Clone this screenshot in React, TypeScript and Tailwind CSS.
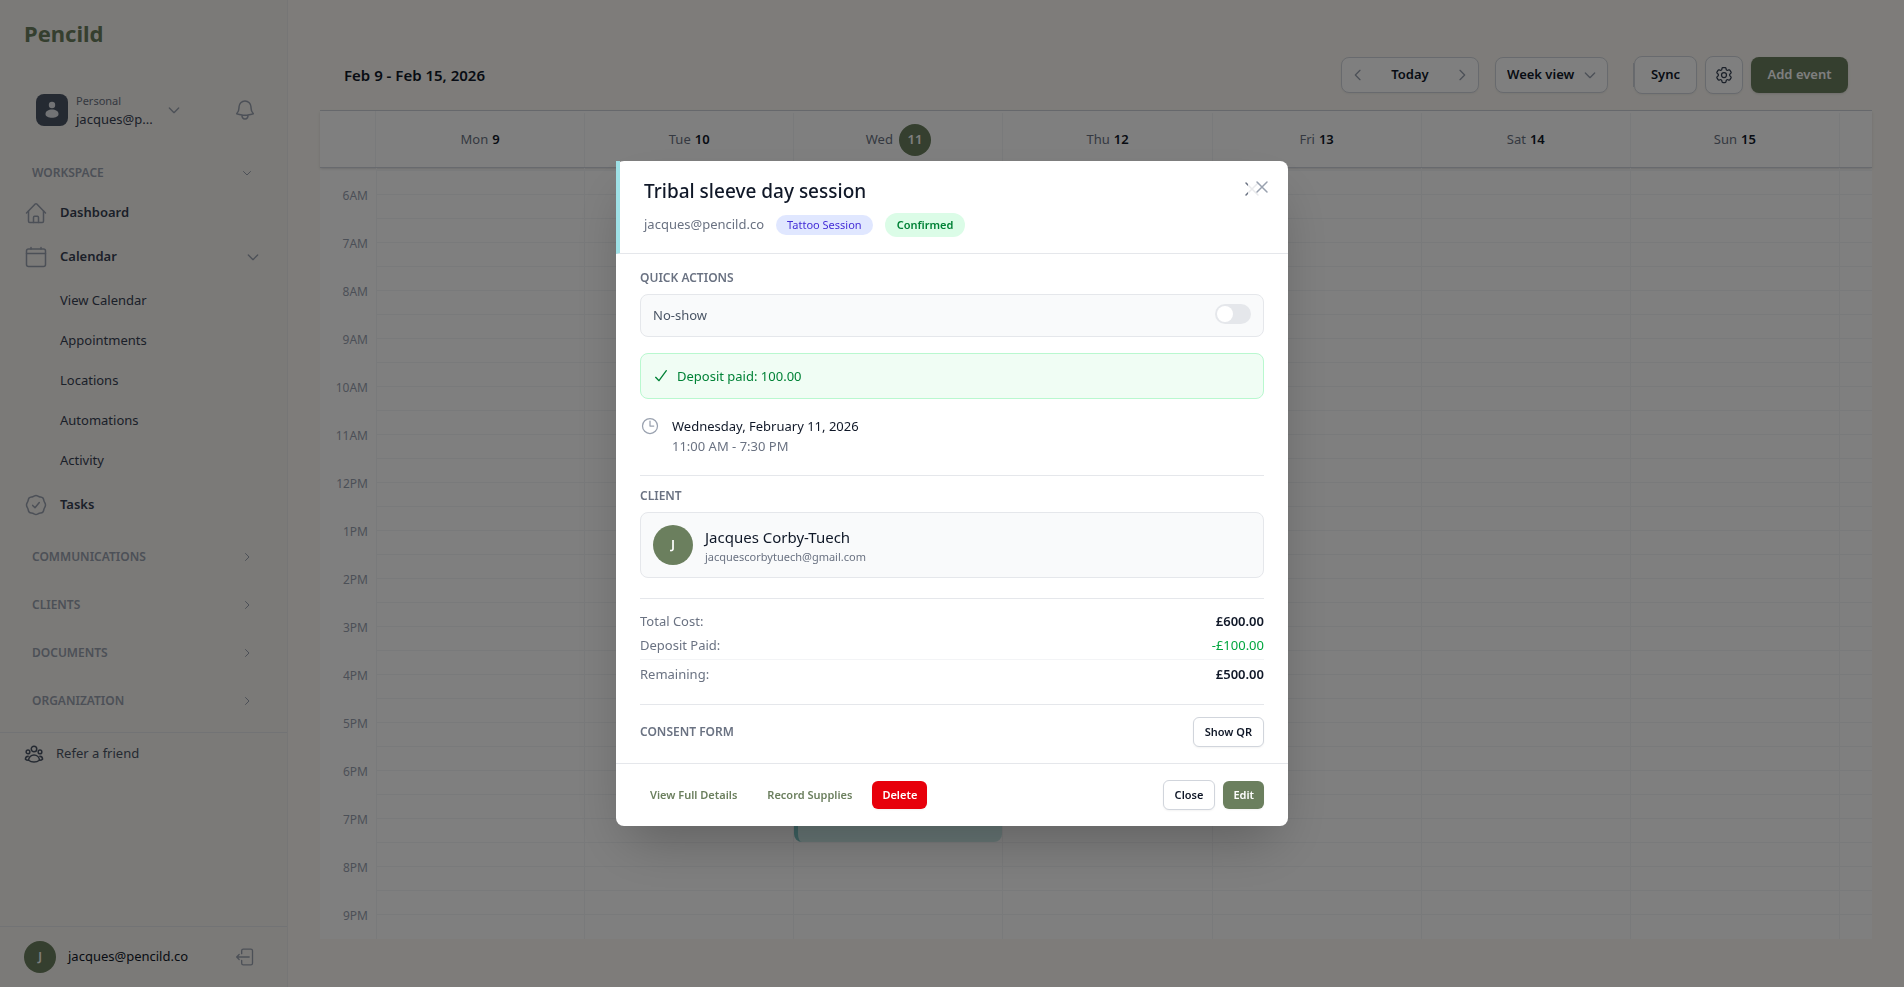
import { useState } from "react";
import type { ReactNode } from "react";
import { HiOutlineBell, HiOutlineClock, HiOutlineCog6Tooth } from "react-icons/hi2";

interface NavSection {
  label: string;
}

interface DayColumn {
  name: string;
  date: number;
  today?: boolean;
}

const calendarLinks = ["View Calendar", "Appointments", "Locations", "Automations", "Activity"];

const closedSections: NavSection[] = [
  { label: "Communications" },
  { label: "Clients" },
  { label: "Documents" },
  { label: "Organization" },
];

const days: DayColumn[] = [
  { name: "Mon", date: 9 },
  { name: "Tue", date: 10 },
  { name: "Wed", date: 11, today: true },
  { name: "Thu", date: 12 },
  { name: "Fri", date: 13 },
  { name: "Sat", date: 14 },
  { name: "Sun", date: 15 },
];

const hours = [
  "6AM", "7AM", "8AM", "9AM", "10AM", "11AM", "12PM", "1PM",
  "2PM", "3PM", "4PM", "5PM", "6PM", "7PM", "8PM", "9PM",
];

const halfHours = Array.from({ length: 31 }, (_, i) => i);

function Icon({ className, width = 1.5, children }: { className: string; width?: number; children: ReactNode }) {
  return (
    <svg
      viewBox="0 0 24 24"
      fill="none"
      stroke="currentColor"
      strokeWidth={width}
      strokeLinecap="round"
      strokeLinejoin="round"
      className={className}
      aria-hidden="true"
    >
      {children}
    </svg>
  );
}

function ChevronDown({ className }: { className: string }) {
  return (
    <Icon className={className} width={2}>
      <path d="m5 9 7 7 7-7" />
    </Icon>
  );
}

function ChevronRight({ className }: { className: string }) {
  return (
    <Icon className={className} width={2}>
      <path d="m9 5 7 7-7 7" />
    </Icon>
  );
}

function HomeIcon() {
  return (
    <Icon className="size-6 text-gray-400">
      <path d="M2.500 12 11.200 3.100a1.100 1.100 0 0 1 1.600 0L21.500 12" />
      <path d="M4.500 10v10.200c0 .7.500 1.200 1.200 1.200h12.600c.7 0 1.200-.5 1.200-1.200V10" />
      <path d="M9.500 21.400v-5c0-.6.500-1.100 1.100-1.100h2.800c.6 0 1.100.5 1.100 1.100v5" />
    </Icon>
  );
}

function CalendarIcon() {
  return (
    <Icon className="size-6 text-gray-400">
      <rect x="2.500" y="4" width="19" height="17.500" rx="2" />
      <path d="M2.500 8.500h19M7 4V2.500M17 4V2.500" />
    </Icon>
  );
}

function TasksIcon() {
  return (
    <Icon className="size-6 text-gray-400">
      <path d="M12 2.500c1.400 0 2 .9 3.300 1.300s2.500.1 3.500 1.100.8 2.200 1.300 3.400 1.400 2 1.400 3.700-.9 2.500-1.400 3.700-.3 2.400-1.300 3.400-2.200.7-3.500 1.100-1.900 1.300-3.300 1.300-2-.9-3.300-1.300-2.500-.1-3.500-1.100-.8-2.200-1.300-3.400S2.500 13.700 2.500 12s.9-2.500 1.400-3.700.3-2.400 1.300-3.400 2.200-.7 3.500-1.100S10.600 2.500 12 2.500Z" />
      <path d="m8.700 12.400 2.300 2.400 4.300-5.300" />
    </Icon>
  );
}

function FriendsIcon() {
  return (
    <Icon className="size-5 text-gray-600" width={1.800}>
      <circle cx="12" cy="6" r="3.300" />
      <circle cx="4.800" cy="9.500" r="2.200" />
      <circle cx="19.200" cy="9.500" r="2.200" />
      <path d="M5.500 19.500c0-3.600 2.900-6.300 6.500-6.300s6.500 2.700 6.500 6.300c-1.800 1.400-4 2.100-6.500 2.100s-4.700-.7-6.500-2.100Z" />
      <path d="M5 14.800c-2 .2-3.300 1.600-3.300 3.500.7.700 1.900 1.200 3.300 1.200M19 14.800c2 .2 3.300 1.600 3.300 3.500-.7.700-1.900 1.200-3.300 1.200" />
    </Icon>
  );
}

function SignOutIcon() {
  return (
    <Icon className="size-5" width={1.600}>
      <path d="M8 8V4.500C8 3.400 8.900 2.500 10 2.500h9c1.100 0 2 .9 2 2v15c0 1.100-.9 2-2 2h-9c-1.100 0-2-.9-2-2V16" />
      <path d="M17 12H2M5 9l-3 3 3 3" />
    </Icon>
  );
}

function Sidebar() {
  return (
    <aside className="flex w-72 shrink-0 flex-col border-r border-gray-200/60 bg-[#f7f4f0]">
      <div className="flex h-[66px] items-center px-6">
        <span className="text-[22px] font-bold text-[#6b7f5e]">Pencild</span>
      </div>

      {/* Workspace switcher */}
      <div className="flex h-[87px] items-center justify-between pr-[30px] pl-9">
        <button className="flex items-center gap-2 text-left">
          <span className="flex size-8 items-center justify-center rounded-lg bg-gray-600 text-gray-200">
            <svg viewBox="0 0 16 18" fill="currentColor" className="h-[18px] w-4" aria-hidden="true">
              <circle cx="8" cy="4" r="3.200" />
              <path d="M1.500 13c0-3 3-4.500 6.500-4.500s6.500 1.500 6.500 4.500c0 2.500-3 3.800-6.500 3.800S1.500 15.500 1.500 13Z" />
            </svg>
          </span>
          <span className="w-[82px] pt-0.5">
            <span className="block text-[11px] leading-4 text-gray-500">Personal</span>
            <span className="block text-[13px] leading-5 text-gray-700">jacques@p...</span>
          </span>
          <ChevronDown className="size-4 text-gray-400" />
        </button>
        <button className="text-gray-400" aria-label="Notifications">
          <HiOutlineBell className="size-6" />
        </button>
      </div>

      <nav className="flex flex-col">
        <button className="flex h-10 items-center justify-between pr-[34px] pl-8 text-[12px] font-semibold text-gray-400">
          WORKSPACE
          <ChevronDown className="size-3" />
        </button>

        <a href="#dashboard" className="flex h-10 items-center gap-3 pl-6 text-[13px] font-semibold text-gray-700">
          <HomeIcon />
          Dashboard
        </a>
        <button className="mt-1 flex h-10 items-center gap-3 pr-[26px] pl-6 text-[13px] font-semibold text-gray-700">
          <CalendarIcon />
          Calendar
          <ChevronDown className="ml-auto size-4 text-gray-400" />
        </button>
        <div className="my-1 flex flex-col">
          {calendarLinks.map((label) => (
            <a key={label} href="#calendar" className="flex h-10 items-center pl-[60px] text-[13px] text-gray-700">
              {label}
            </a>
          ))}
        </div>
        <a href="#tasks" className="flex h-10 items-center gap-3 pl-6 text-[13px] font-semibold text-gray-700">
          <TasksIcon />
          Tasks
        </a>

        <div className="mt-2 flex flex-col">
          {closedSections.map((section) => (
            <button
              key={section.label}
              className="flex h-12 items-center justify-between pr-[34px] pl-8 text-[12px] font-semibold text-gray-400 uppercase"
            >
              {section.label}
              <ChevronRight className="size-3" />
            </button>
          ))}
        </div>
      </nav>

      <div className="mt-[7px] border-t border-gray-200">
        <a href="#refer" className="flex h-[42px] items-center gap-3 pl-6 text-[13px] text-gray-600">
          <FriendsIcon />
          Refer a friend
        </a>
      </div>

      <div className="mt-auto flex h-[61px] items-center gap-3 border-t border-gray-200 pr-8 pl-6">
        <span className="flex size-8 items-center justify-center rounded-full bg-[#6b7f5e] text-[12px] font-semibold text-white">
          J
        </span>
        <span className="text-[13px] text-gray-900">jacques@pencild.co</span>
        <button className="ml-auto text-gray-400" aria-label="Sign out">
          <SignOutIcon />
        </button>
      </div>
    </aside>
  );
}

function Toolbar() {
  return (
    <div className="flex h-[71px] items-center justify-between border-b border-gray-300 px-6">
      <h1 className="text-[15px] font-semibold text-gray-900">Feb 9 - Feb 15, 2026</h1>
      <div className="flex items-center text-[13px] font-semibold text-gray-900">
        <div className="flex h-9 w-[138px] items-center justify-between rounded-lg border border-gray-300 bg-white px-2 shadow-xs">
          <button className="text-gray-400" aria-label="Previous week">
            <Icon className="size-4" width={2}>
              <path d="m15 5-7 7 7 7" />
            </Icon>
          </button>
          <button>Today</button>
          <button className="text-gray-400" aria-label="Next week">
            <ChevronRight className="size-4" />
          </button>
        </div>
        <div className="relative ml-4">
          <select
            aria-label="Calendar view"
            className="h-9 w-[113px] appearance-none rounded-lg border border-gray-300 bg-white pl-[11px] font-semibold shadow-xs"
          >
            <option>Week view</option>
            <option>Day view</option>
            <option>Month view</option>
          </select>
          <ChevronDown className="pointer-events-none absolute top-2.5 right-2.5 size-4 text-gray-400" />
        </div>
        <div className="ml-[25px] h-6 w-px bg-gray-300" />
        <button className="h-[38px] w-[63px] rounded-lg border border-gray-300 bg-white shadow-xs">Sync</button>
        <button
          className="ml-2 flex size-[38px] items-center justify-center rounded-lg border border-gray-300 bg-white text-gray-700 shadow-xs"
          aria-label="Settings"
        >
          <HiOutlineCog6Tooth className="size-5" />
        </button>
        <button className="ml-2 h-9 w-[97px] rounded-lg bg-[#6b7f5e] text-white shadow-sm">Add event</button>
      </div>
    </div>
  );
}

function WeekGrid() {
  return (
    <div className="bg-white">
      {/* Day names */}
      <div className="relative flex h-[57px] border-b border-gray-300 pr-8 shadow-sm">
        <div className="w-14 shrink-0 border-r border-gray-100" />
        <div className="grid grow grid-cols-7 pt-0.5 text-[13px] text-gray-500">
          {days.map((day) => (
            <div key={day.name} className="flex items-center justify-center border-r border-gray-100">
              {day.name}
              {day.today ? (
                <span className="ml-1.5 flex size-8 items-center justify-center rounded-full bg-[#6b7f5e] font-semibold text-white">
                  {day.date}
                </span>
              ) : (
                <span className="ml-1 font-semibold text-gray-900">{day.date}</span>
              )}
            </div>
          ))}
        </div>
      </div>

      {/* Hours */}
      <div className="flex">
        <div className="w-14 shrink-0 pt-[3px] text-[12px] text-gray-400">
          {hours.map((hour) => (
            <div key={hour} className="flex h-12 items-center justify-end pt-px pr-2">
              {hour}
            </div>
          ))}
        </div>
        <div className="relative grow border-l border-gray-100">
          <div className="h-[3px] border-b border-gray-100" />
          {halfHours.map((slot) => (
            <div key={slot} className="h-6 border-b border-gray-100" />
          ))}
          <div className="absolute inset-y-0 right-8 -left-px grid grid-cols-7">
            {days.map((day) => (
              <div key={day.name} className="relative border-r border-gray-100">
                {day.today && (
                  <div className="absolute inset-x-0 top-[266px] h-[408px] rounded-lg border-l-4 border-[#7cc4c4] bg-[#cdebe9]" />
                )}
              </div>
            ))}
          </div>
        </div>
      </div>
    </div>
  );
}

function EventDialog() {
  const [noShow, setNoShow] = useState(false);

  return (
    <div
      role="dialog"
      aria-label="Tribal sleeve day session"
      className="relative w-full max-w-2xl rounded-lg bg-white shadow-2xl"
    >
      <button className="absolute top-4 right-6 text-gray-500" aria-label="Dismiss">
        <Icon className="size-6">
          <path d="M6 18 18 6M6 6l12 12" />
        </Icon>
      </button>
      <button
        className="absolute top-3 right-3 flex size-7 items-center justify-center bg-white/85 text-gray-400"
        aria-label="Close dialog"
      >
        <Icon className="size-5" width={1.800}>
          <path d="M6 18 18 6M6 6l12 12" />
        </Icon>
      </button>

      <div className="border-b border-l-4 border-b-gray-200 border-l-[#9fe1e7] px-6 py-4">
        <h2 className="text-[19px] leading-7 font-medium text-gray-900">Tribal sleeve day session</h2>
        <div className="mt-2 flex items-center gap-3">
          <span className="text-[13px] text-gray-500">jacques@pencild.co</span>
          <span className="rounded-full bg-indigo-100 px-[11px] text-[11px] leading-5 text-indigo-700">
            Tattoo Session
          </span>
          <span className="rounded-full bg-green-100 px-3 text-[11px] leading-6 font-semibold text-green-700">
            Confirmed
          </span>
        </div>
      </div>

      <div className="px-6 pt-4 pb-4">
        <h3 className="mb-2 text-[12px] leading-4 font-semibold text-gray-500">QUICK ACTIONS</h3>
        <div className="flex h-[43px] items-center justify-between rounded-lg border border-gray-200 bg-gray-50 px-3">
          <label htmlFor="no-show" className="text-[13px] text-gray-600">
            No-show
          </label>
          <input
            id="no-show"
            type="checkbox"
            checked={noShow}
            onChange={(e) => setNoShow(e.target.checked)}
            className="mb-1 flex h-5 w-9 appearance-none items-center rounded-full bg-gray-200 px-0.5 before:size-4 before:rounded-full before:bg-white checked:justify-end checked:bg-[#6b7f5e]"
          />
        </div>

        <div className="mt-4 flex items-center gap-2 rounded-lg border border-green-200 bg-green-50 p-3 text-[13px] leading-5 text-green-700">
          <Icon className="size-4" width={2}>
            <path d="m4 14 5 5L20 4" />
          </Icon>
          Deposit paid: 100.00
        </div>

        <div className="mt-4 flex gap-3 pt-px pb-[3px] text-[13px] leading-5">
          <HiOutlineClock className="size-5 text-gray-400" />
          <div>
            <p className="text-gray-900">Wednesday, February 11, 2026</p>
            <p className="text-gray-500">11:00 AM - 7:30 PM</p>
          </div>
        </div>

        <section className="mt-4 border-t border-gray-200 pt-3">
          <h3 className="mb-2 text-[12px] leading-4 font-semibold text-gray-500">CLIENT</h3>
          <div className="flex items-center gap-3 rounded-lg border border-gray-200 bg-gray-50 p-3">
            <span className="flex size-10 items-center justify-center rounded-full bg-[#6b7f5e] text-[13px] font-semibold text-white">
              J
            </span>
            <div>
              <p className="text-[15px] leading-6 text-gray-900">Jacques Corby-Tuech</p>
              <p className="text-[11px] leading-4 text-gray-500">jacquescorbytuech@gmail.com</p>
            </div>
          </div>
        </section>

        <dl className="mt-5 border-t border-gray-200 pt-3 text-[13px] leading-5 text-gray-500">
          <div className="flex justify-between">
            <dt>Total Cost:</dt>
            <dd className="font-semibold text-gray-900">£600.00</dd>
          </div>
          <div className="mt-1 flex justify-between">
            <dt>Deposit Paid:</dt>
            <dd className="text-green-600">-£100.00</dd>
          </div>
          <div className="mt-1 flex justify-between border-t border-gray-100 pt-1">
            <dt>Remaining:</dt>
            <dd className="font-semibold text-gray-900">£500.00</dd>
          </div>
        </dl>

        <section className="mt-5 flex items-center justify-between border-t border-gray-200 pt-3">
          <h3 className="text-[12px] leading-4 font-semibold text-gray-500">CONSENT FORM</h3>
          <button className="h-[30px] rounded-md border border-gray-300 bg-white px-[11px] text-[11px] font-semibold text-gray-900 shadow-xs">
            Show QR
          </button>
        </section>
      </div>

      <div className="flex items-center justify-between border-t border-gray-200 px-6 py-4 text-[11px] font-semibold">
        <div className="flex items-center gap-2.5">
          <a href="#details" className="px-2.5 text-[#6b7f5e]">View Full Details</a>
          <a href="#supplies" className="px-2.5 text-[#6b7f5e]">Record Supplies</a>
          <button className="h-7 rounded-md bg-red-600 px-2.5 text-white shadow-xs">Delete</button>
        </div>
        <div className="flex items-center gap-2">
          <button className="h-[30px] rounded-md border border-gray-300 bg-white px-[11px] text-gray-900 shadow-xs">
            Close
          </button>
          <button className="h-7 rounded-md bg-[#6b7f5e] px-2.5 text-white shadow-xs">Edit</button>
        </div>
      </div>
    </div>
  );
}

export default function App() {
  return (
    <div className="flex min-h-screen bg-[#fcf9f4] font-['Noto_Sans','Open_Sans',sans-serif]">
      <Sidebar />
      <main className="grow px-8 pt-10 pb-12">
        <Toolbar />
        <WeekGrid />
      </main>
      <div className="fixed inset-0 flex items-center justify-center bg-black/50">
        <EventDialog />
      </div>
    </div>
  );
}
